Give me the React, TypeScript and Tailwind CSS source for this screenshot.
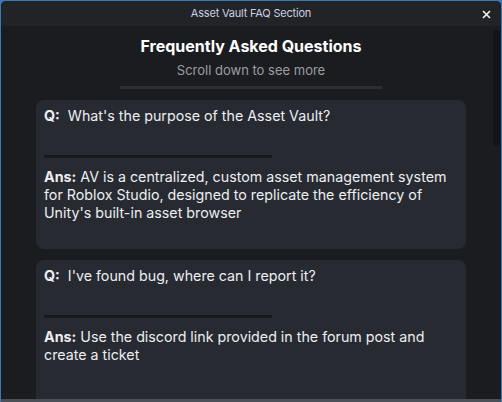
import React from 'react';

const faqs = [
  {
    q: "What's the purpose of the Asset Vault?",
    a: "AV is a centralized, custom asset management system for Roblox Studio, designed to replicate the efficiency of Unity's built-in asset browser",
  },
  {
    q: "I've found bug, where can I report it?",
    a: 'Use the discord link provided in the forum post and create a ticket',
  },
];

function FaqCard({ q, a }: { q: string; a: string }) {
  return (
    <div className="h-[149px] shrink-0 rounded-lg bg-[#272a31] px-2 pt-[7px] text-[14.25px] leading-[18px] text-[#eceef2]">
      <p className="whitespace-pre">
        <span className="font-bold">Q:</span>
        {'  '}
        {q}
      </p>
      <div className="mt-[30px] h-[3px] w-[228px] bg-[#18191c]" />
      <p className="mt-[10px]">
        <span className="font-bold">Ans:</span> {a}
      </p>
    </div>
  );
}

export default function App() {
  return (
    <div className="flex h-[402px] w-[502px] flex-col overflow-hidden bg-[#3a78b6] px-px pt-px font-['Inter','Noto_Sans',sans-serif]">
      <div className="flex min-h-0 flex-1 flex-col overflow-hidden rounded-t-[5px] bg-[#1b1c20]">
        <div className="relative flex h-[25px] shrink-0 items-center justify-center bg-[#222327]">
          <span className="text-[11px] tracking-[-0.2px] text-[#c8d1e4]">Asset Vault FAQ Section</span>
          <svg
            className="absolute right-[10px] top-[9px]"
            width="9"
            height="9"
            viewBox="0 0 9 9"
            fill="none"
            stroke="#f2f2f2"
            strokeWidth="1.6"
          >
            <path d="M1 1l7 7M8 1l-7 7" />
          </svg>
        </div>
        <div className="relative min-h-0 flex-1 overflow-hidden">
          <div className="flex flex-col items-center pt-[9px]">
            <h1 className="text-[16px] font-bold leading-[22px] text-white">Frequently Asked Questions</h1>
            <p className="mt-[5px] text-[13px] leading-[16px] text-[#9c9ea3]">Scroll down to see more</p>
            <div className="mt-[8px] h-[3px] w-[262px] bg-[#2c2e33]" />
          </div>
          <div className="mt-[11px] flex flex-col gap-[11px] pl-[35px] pr-[35px]">
            {faqs.map((f) => (
              <FaqCard key={f.q} q={f.q} a={f.a} />
            ))}
          </div>
          <div className="absolute right-[1px] top-[4px] h-[116px] w-[7px] rounded-sm bg-[#131417]" />
        </div>
      </div>
      <div className="h-[3px] shrink-0 bg-[#4b5058]" />
    </div>
  );
}
